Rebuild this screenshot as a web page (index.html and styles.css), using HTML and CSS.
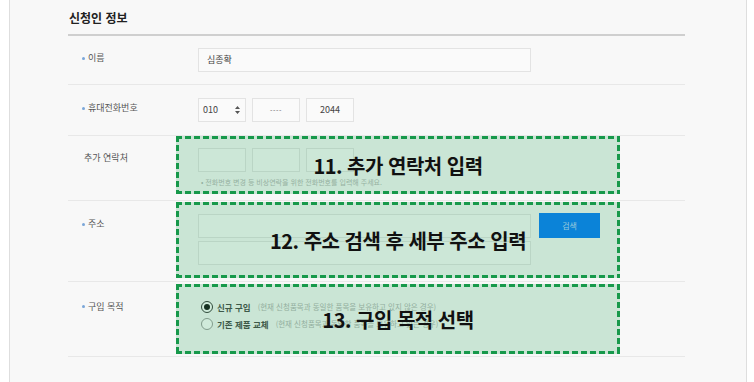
FILE: index.html
```html
<!DOCTYPE html>
<html lang="ko">
<head>
<meta charset="utf-8">
<title>신청인 정보</title>
<link rel="stylesheet" href="styles.css">
</head>
<body>
<div class="frame">
  <h2 class="title">신청인 정보</h2>

  <div class="row r1">
    <div class="label"><span class="dot"></span>이름</div>
    <div class="field">
      <div class="input name">심종확</div>
    </div>
  </div>

  <div class="row r2">
    <div class="label"><span class="dot"></span>휴대전화번호</div>
    <div class="field phone">
      <div class="input sm sel">010
        <svg class="arr" width="5" height="8" viewBox="0 0 5 8"><path d="M2.5 0L5 3H0z M2.5 8L0 5h5z" fill="#555"/></svg>
      </div>
      <div class="input sm center mask">----</div>
      <div class="input sm center">2044</div>
    </div>
  </div>

  <div class="row r3">
    <div class="label plain">추가 연락처</div>
    <div class="field">
      <div class="phone">
        <div class="input sm"></div>
        <div class="input sm"></div>
        <div class="input sm"></div>
      </div>
      <p class="hint">• 전화번호 변경 등 비상연락을 위한 전화번호를 입력해 주세요.</p>
    </div>
    <div class="note n1">11. 추가 연락처 입력</div>
  </div>

  <div class="row r4">
    <div class="label"><span class="dot"></span>주소</div>
    <div class="field addr">
      <div class="line">
        <div class="input wide"></div>
        <div class="btn">검색</div>
      </div>
      <div class="input wide"></div>
    </div>
    <div class="note n2">12. 주소 검색 후 세부 주소 입력</div>
  </div>

  <div class="row r5">
    <div class="label"><span class="dot"></span>구입 목적</div>
    <div class="field">
      <div class="opt"><span class="radio on"></span><b>신규 구입</b><span class="desc">(현재 신청품목과 동일한 품목을 보유하고 있지 않은 경우)</span></div>
      <div class="opt"><span class="radio"></span><b>기존 제품 교체</b><span class="desc">(현재 신청품목과 동일한 품목을 보유하고 있는 경우)</span></div>
    </div>
    <div class="note n3">13. 구입 목적 선택</div>
  </div>
</div>
</body>
</html>
```

FILE: styles.css
```css
html, body {
  margin: 0;
  padding: 0;
  background: #ffffff;
}
body {
  font-family: "Noto Sans CJK KR", "Noto Sans", sans-serif;
  color: #333;
}
.frame {
  margin-left: 9px;
  width: 738px;
  height: 382px;
  box-sizing: border-box;
  padding: 9px 61px 0 58px;
  background: #f8f8f8;
  border-left: 1px solid #dedede;
  border-right: 1px solid #dedede;
  overflow: hidden;
}
.title {
  margin: 0;
  padding: 0 0 8px 1px;
  font-size: 12px;
  line-height: 17px;
  font-weight: 700;
  color: #222;
  border-bottom: 2px solid #cfcfcf;
}
.row {
  display: flex;
  position: relative;
  border-bottom: 1px solid #e8e8e8;
}
.r1 { padding: 12px 0 12px; }
.r2 { padding: 13px 0 13px; }
.r3 { padding: 12px 0 13px; }
.r4 { padding: 13px 0 16px; }
.r5 { padding: 16px 0 24px; }

.label {
  flex: none;
  width: 130px;
  box-sizing: border-box;
  padding-left: 14px;
  font-size: 9px;
  line-height: 20px;
  color: #555;
  display: flex;
  align-items: flex-start;
}
.label.plain { padding-left: 16px; }
.r5 .label { line-height: 17px; }
.dot {
  width: 3px;
  height: 3px;
  border-radius: 50%;
  background: #7aa6d8;
  margin: 9px 3px 0 0;
  flex: none;
}
.r5 .dot { margin-top: 7px; }

.field {
  display: flex;
  flex-direction: column;
}
.phone {
  display: flex;
  flex-direction: row;
  gap: 6px;
}
.input {
  box-sizing: border-box;
  height: 24px;
  border: 1px solid #e3e3e3;
  background: #fafafa;
  font-size: 9px;
  line-height: 22px;
  color: #444;
  padding: 0 8px;
}
.input.name { width: 333px; }
.input.sm { width: 48px; padding: 0 4px; }
.input.sel {
  display: flex;
  justify-content: space-between;
  align-items: center;
}
.arr { margin-right: 1px; }
.input.center { text-align: center; }
.input.mask { font-size: 7px; letter-spacing: 0.6px; color: #666; }
.input.wide { width: 333px; }

.hint {
  margin: 5px 0 0 3px;
  font-size: 7px;
  line-height: 10px;
  color: #b5b5b5;
}
.addr { gap: 3px; }
.line {
  display: flex;
  align-items: flex-start;
}
.btn {
  margin-left: 8px;
  margin-top: -1px;
  width: 61px;
  height: 25px;
  background: #037afc;
  color: #b7d6ff;
  font-size: 8px;
  line-height: 25px;
  text-align: center;
}

.opt {
  display: flex;
  align-items: center;
  height: 17px;
  padding-left: 3px;
}
.radio {
  width: 12px;
  height: 12px;
  box-sizing: border-box;
  border-radius: 50%;
  border: 1px solid #9a9a9a;
  background: #fff;
  position: relative;
  flex: none;
}
.radio.on { border-color: #333; }
.radio.on::after {
  content: "";
  position: absolute;
  left: 2px;
  top: 2px;
  width: 6px;
  height: 6px;
  border-radius: 50%;
  background: #111;
}
.opt b {
  margin-left: 4px;
  font-size: 8.5px;
  font-weight: 700;
  color: #444;
}
.desc {
  margin-left: 7px;
  font-size: 7.5px;
  color: #b0b0b0;
}

.note {
  position: absolute;
  left: 108px;
  width: 444px;
  box-sizing: border-box;
  display: flex;
  align-items: center;
  justify-content: center;
  font-size: 20px;
  font-weight: 700;
  color: #111;
  letter-spacing: -0.5px;
  background:
    linear-gradient(90deg, #17994b 6px, transparent 6px) 0 0 / 9px 3px repeat-x,
    linear-gradient(90deg, #17994b 6px, transparent 6px) 0 100% / 9px 3px repeat-x,
    linear-gradient(180deg, #17994b 6px, transparent 6px) 0 0 / 3px 9px repeat-y,
    linear-gradient(180deg, #17994b 6px, transparent 6px) 100% 0 / 3px 9px repeat-y,
    rgba(40, 165, 90, 0.22);
}
.n1 { top: 0; height: 58px; }
.n2 { top: 1px; height: 76px; }
.n3 { top: 2px; height: 70px; }
```
